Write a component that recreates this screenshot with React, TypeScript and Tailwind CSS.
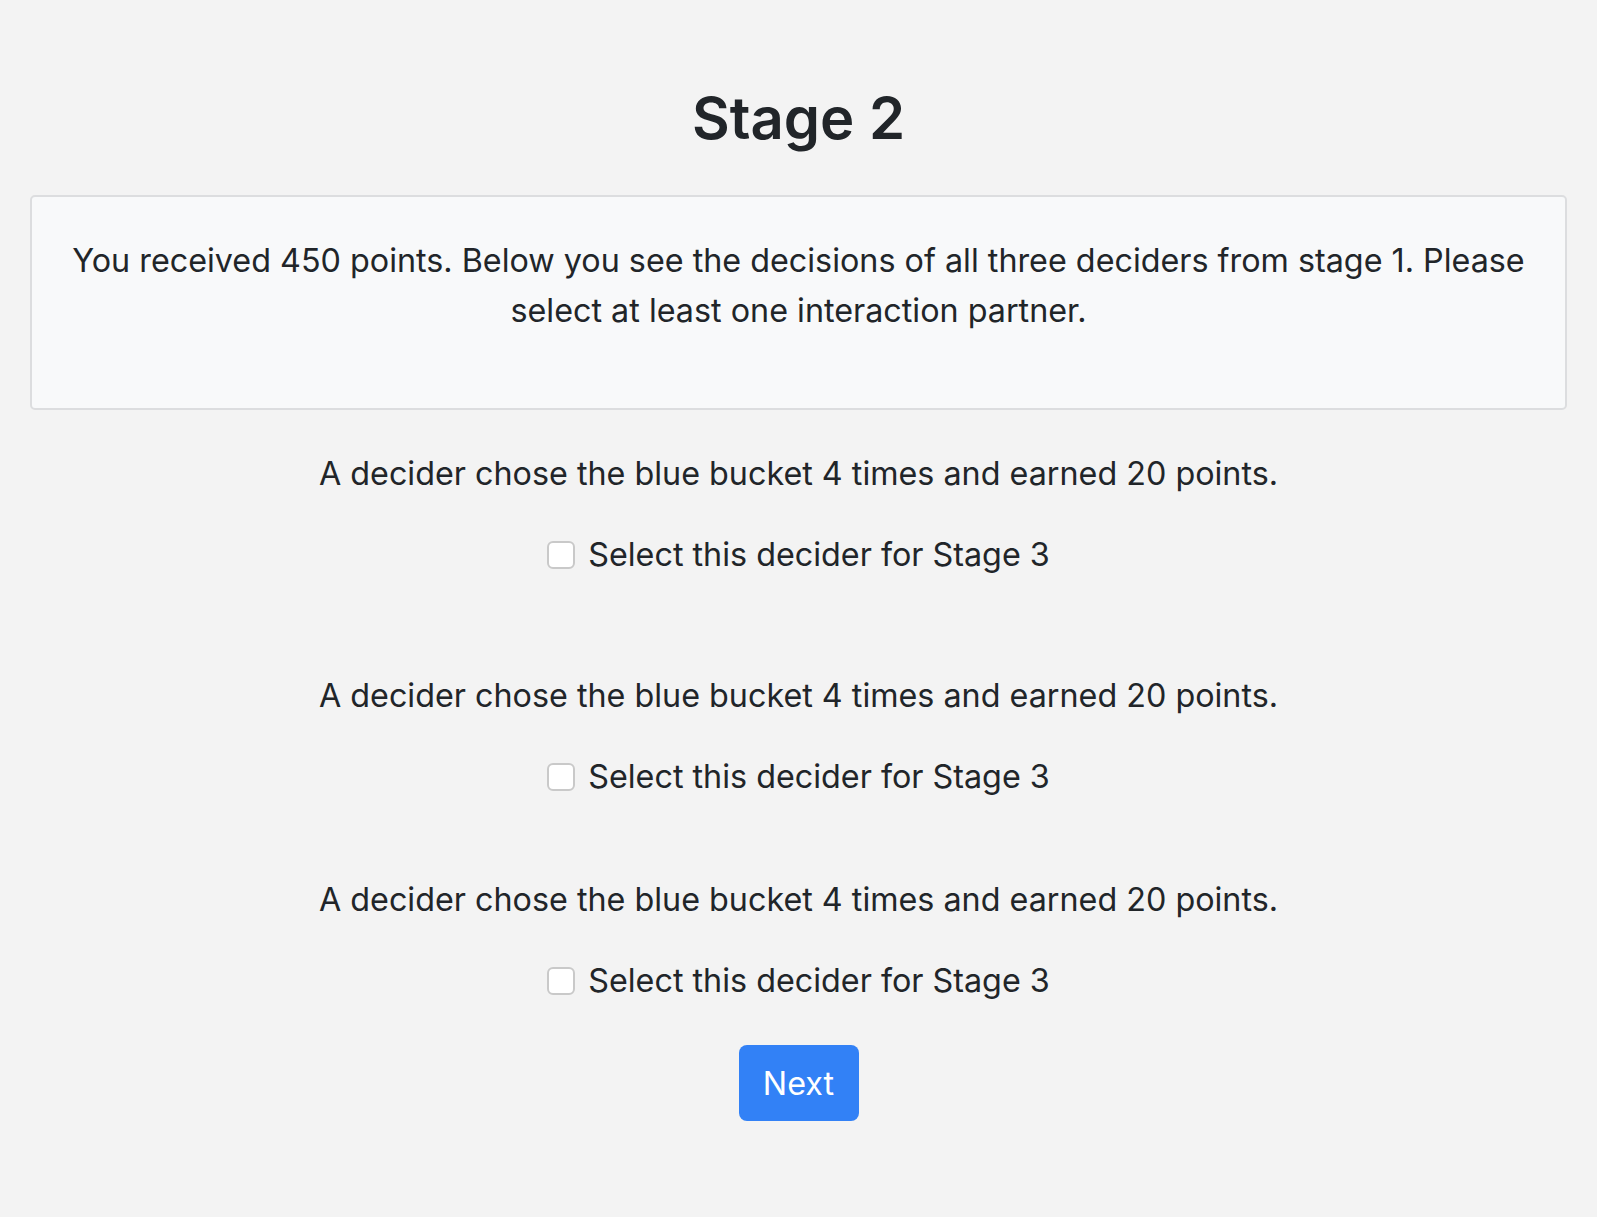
import React from 'react';

const DECIDERS = [
  { text: 'A decider chose the blue bucket 4 times and earned 20 points.', gap: 'mt-[39px]' },
  { text: 'A decider chose the blue bucket 4 times and earned 20 points.', gap: 'mt-[91px]' },
  { text: 'A decider chose the blue bucket 4 times and earned 20 points.', gap: 'mt-[73px]' },
];

const App: React.FC = () => {
  return (
    <div
      className="min-h-[1217px] w-full bg-[#f3f3f3] text-[#212529] px-[30px]"
      style={{ fontFamily: 'Inter, "Noto Sans", sans-serif' }}
    >
      {/* Title */}
      <h1 className="pt-[85px] text-center text-[58px] leading-[67px] font-semibold">Stage 2</h1>

      {/* Info card */}
      <div className="mt-[43px] rounded-[5px] border-2 border-[#dcdddf] bg-[#f8f9fa] px-10 pt-[39px] pb-[72px] text-center text-[32.3px] leading-[50px]">
        You received 450 points. Below you see the decisions of all three deciders from stage 1. Please select at least one interaction partner.
      </div>

      {/* Decider rows */}
      {DECIDERS.map((d, i) => (
        <div key={i} className={`${d.gap} flex flex-col items-center text-[32.3px] leading-[50px]`}>
          <p>{d.text}</p>
          <label className="mt-[31px] flex items-center gap-[13px]">
            <span className="h-[28px] w-[28px] rounded-[6px] border-2 border-[#c9c9c9] bg-white" />
            <span>Select this decider for Stage 3</span>
          </label>
        </div>
      ))}

      {/* Next */}
      <div className="mt-[39px] flex justify-center">
        <button className="h-[76px] w-[120px] rounded-[8px] bg-[#3281f6] pt-[3px] text-[32.3px] text-white">Next</button>
      </div>
    </div>
  );
};

export default App;
